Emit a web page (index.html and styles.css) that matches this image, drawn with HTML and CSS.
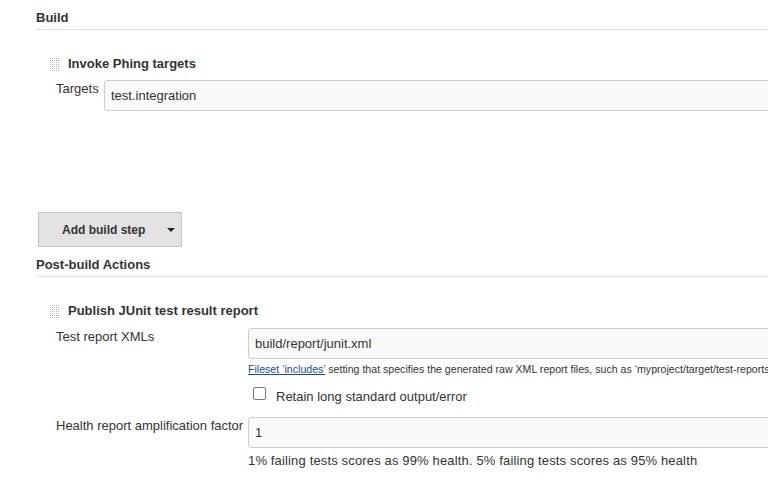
FILE: index.html
```
<!DOCTYPE html>
<html>
<head>
<meta charset="utf-8">
<link rel="stylesheet" href="styles.css">
</head>
<body>
<div class="page">
  <section class="section">
    <h2 class="section-title">Build</h2>
    <div class="step">
      <div class="step-head"><span class="handle"></span><span class="step-title">Invoke Phing targets</span></div>
      <div class="row row-narrow">
        <label class="label label-narrow">Targets</label>
        <div class="field"><input class="text-input" type="text" value="test.integration"></div>
      </div>
    </div>
    <div class="add-bar">
      <button class="btn" type="button"><span>Add build step</span><span class="caret"></span></button>
    </div>
  </section>

  <section class="section">
    <h2 class="section-title">Post-build Actions</h2>
    <div class="step">
      <div class="step-head"><span class="handle"></span><span class="step-title">Publish JUnit test result report</span></div>
      <div class="row">
        <label class="label label-wide">Test report XMLs</label>
        <div class="field">
          <input class="text-input" type="text" value="build/report/junit.xml">
          <div class="help small"><a href="#" class="link">Fileset ‘includes’</a> setting that specifies the generated raw XML report files, such as ‘myproject/target/test-reports/*.xml’. Basedir of the fileset is the workspace root.</div>
          <label class="check-row"><input class="check" type="checkbox"><span>Retain long standard output/error</span></label>
        </div>
      </div>
      <div class="row row-health">
        <label class="label label-wide">Health report amplification factor</label>
        <div class="field">
          <input class="text-input" type="text" value="1">
          <div class="help">1% failing tests scores as 99% health. 5% failing tests scores as 95% health</div>
        </div>
      </div>
    </div>
  </section>
</div>
</body>
</html>
```
FILE: styles.css
```
html, body {
  margin: 0;
  padding: 0;
  background: #fff;
  overflow: hidden;
}
body {
  font-family: "Liberation Sans", Arial, sans-serif;
  font-size: 13px;
  line-height: 16px;
  color: #333;
}
.page {
  width: 840px;
}
.section-title {
  margin: 0 0 0 36px;
  padding: 10px 0 3px;
  font-size: 13px;
  line-height: 16px;
  font-weight: bold;
  color: #333;
  border-bottom: 1px solid #ddd;
}
.step {
  margin-top: 26px;
}
.step-head {
  display: flex;
  align-items: center;
  padding-left: 49px;
  height: 16px;
}
.handle {
  width: 11px;
  height: 15px;
  margin-right: 8px;
  background-color: #b8b8b8;
  background-image: linear-gradient(90deg, #fff 1px, transparent 1px), linear-gradient(#fff 1px, transparent 1px);
  background-size: 2px 2px;
}
.step-title {
  font-weight: bold;
}
.row {
  display: flex;
  margin-top: 9px;
}
.row-narrow {
  margin-top: 8px;
}
.row-health {
  margin-top: 12px;
}
.label {
  padding-left: 56px;
  padding-top: 1px;
  flex: none;
  box-sizing: border-box;
  white-space: nowrap;
}
.label-narrow {
  width: 104px;
}
.label-wide {
  width: 248px;
}
.field {
  flex: 1;
  min-width: 0;
}
.text-input {
  display: block;
  box-sizing: border-box;
  width: 100%;
  height: 31px;
  margin: 0;
  padding: 0 6px;
  border: 1px solid #ccc;
  border-radius: 3px;
  background: #fafafa;
  font-family: "Liberation Sans", Arial, sans-serif;
  font-size: 13px;
  color: #333;
  outline: none;
}
.add-bar {
  margin-top: 101px;
  padding-left: 38px;
}
.btn {
  display: flex;
  align-items: center;
  box-sizing: border-box;
  width: 144px;
  height: 35px;
  margin: 0;
  padding: 0 0 0 23px;
  border: 1px solid #c4c4c4;
  border-radius: 0;
  background: #e3e3e3;
  font-family: "Liberation Sans", Arial, sans-serif;
  font-size: 12px;
  font-weight: bold;
  color: #333;
}
.caret {
  width: 0;
  height: 0;
  margin-left: 22px;
  border-left: 4px solid transparent;
  border-right: 4px solid transparent;
  border-top: 4px solid #222;
}
.help {
  margin-top: 5px;
  white-space: nowrap;
  letter-spacing: 0.15px;
}
.help.small {
  margin-top: 4px;
  font-size: 10.6px;
  line-height: 13px;
  letter-spacing: 0;
}
.link {
  color: #204a87;
  text-decoration: underline;
}
.check-row {
  display: flex;
  align-items: center;
  margin-top: 13px;
  padding-left: 5px;
  height: 16px;
}
.check {
  appearance: none;
  -webkit-appearance: none;
  width: 13px;
  height: 13px;
  margin: 0 10px 0 0;
  box-sizing: border-box;
  border: 1px solid #777;
  border-radius: 2px;
  background: #fff;
  position: relative;
  top: -4px;
}
```
